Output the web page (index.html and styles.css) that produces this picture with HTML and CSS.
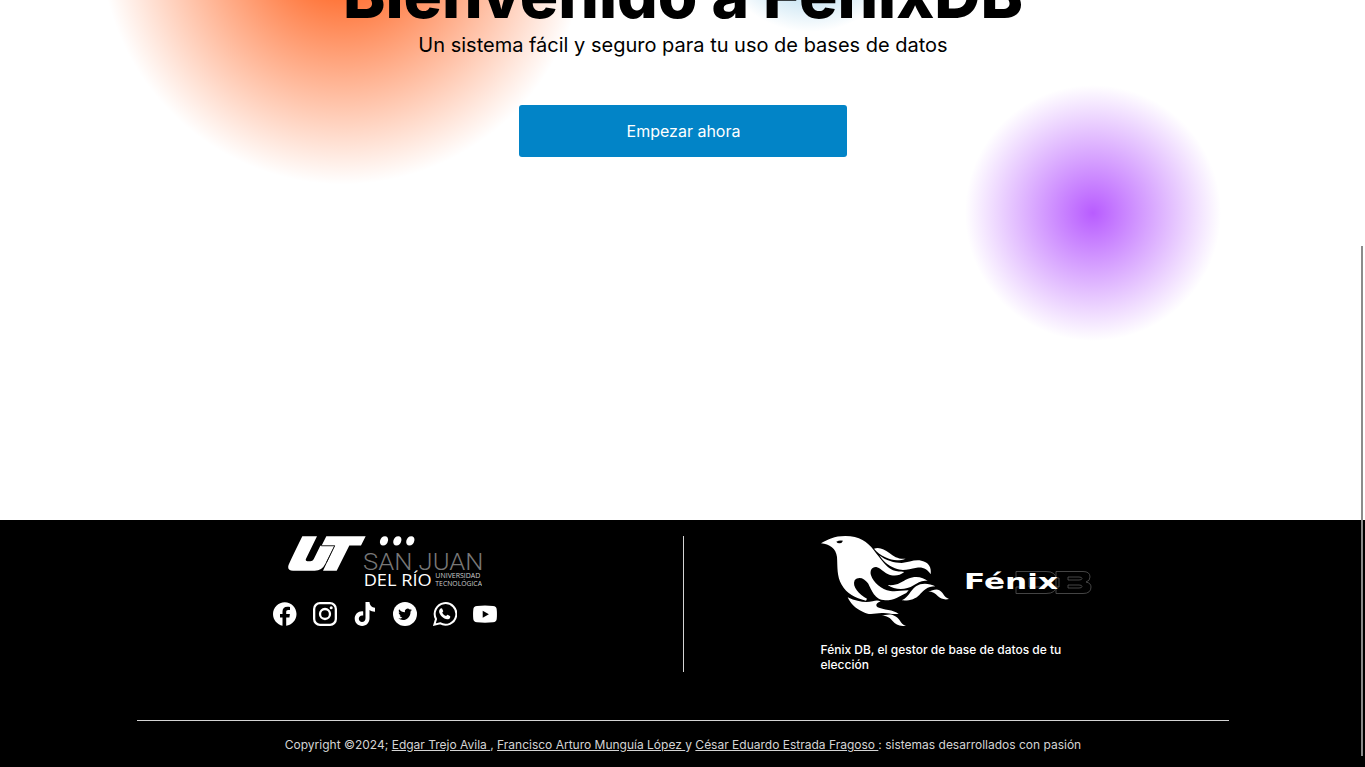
FILE: index.html
```
<!DOCTYPE html>
<html lang="es">
<head>
<meta charset="utf-8">
<title>FénixDB</title>
<link rel="stylesheet" href="styles.css">
</head>
<body>
<main class="hero">
  <div class="glow glow-orange"></div>
  <div class="glow glow-blue"></div>
  <div class="glow glow-purple"></div>
  <h1 class="title">Bienvenido a FénixDB</h1>
  <p class="subtitle">Un sistema fácil y seguro para tu uso de bases de datos</p>
  <a class="button">Empezar ahora</a>
</main>
<footer class="footer">
  <div class="columns">
    <section class="school">
      <svg class="school-logo" viewBox="24 33 582 152" fill="#fff">
        <path d="M67 33H111L78 101Q75 108 82 108H91Q98 108 101 102L121 62H163L136 116Q126 137 104 137H39Q20 136 26 119Q29 110 67 33Z"/>
        <path d="M139 33H257L243 61H208L170 137H129L165 61H125Z"/>
        <path d="M124 62H164L140 111" fill="none" stroke="#000" stroke-width="2"/>
        <g transform="translate(10 0) skewX(-12)"><ellipse cx="312" cy="47" rx="12" ry="14"/><ellipse cx="352" cy="47" rx="12" ry="14"/><ellipse cx="391" cy="47" rx="12" ry="14"/></g>
        <g class="logo-text">
          <text class="logo-city" x="249" y="134" textLength="361" lengthAdjust="spacingAndGlyphs">SAN JUAN</text>
          <text class="logo-river" x="251" y="182" textLength="204" lengthAdjust="spacingAndGlyphs">DEL RÍO</text>
          <text class="logo-small" x="466" y="158" textLength="135" lengthAdjust="spacingAndGlyphs">UNIVERSIDAD</text>
          <text class="logo-small" x="466" y="182" textLength="140" lengthAdjust="spacingAndGlyphs">TECNOLÓGICA</text>
        </g>
      </svg>
      <div class="socials">
        <svg viewBox="0 0 24 24"><path d="M23.500 12C23.500 5.400 18.300.2 11.800.2S0 5.400 0 12c0 5.900 4.300 10.700 9.500 11.700v-8.100h-2.500v-3.500h2.500V9.400c0-3 1.800-4.700 4.800-4.700 1.300 0 2.700.2 2.700.2v3h-1.800c-1.500 0-2 .9-2 1.900v2.300h3.700l-.5 3.500h-3.200v8.100C19 22.900 23.500 18 23.500 12Z"/></svg>
        <svg viewBox="0 0 24 24"><g fill="none" stroke="#fff" stroke-width="2.300"><rect x="1.150" y="1.150" width="21.700" height="21.700" rx="5.800"/><circle cx="12" cy="12" r="5"/></g><circle cx="18.200" cy="5.800" r="1.500"/></svg>
        <svg viewBox="0 0 24 24"><path d="M12.500 0h4c.2 3.200 2.400 5.500 5.500 5.800v4c-2 .1-3.900-.6-5.500-1.700v8.200c0 4.400-3 7.700-7.400 7.700-4.200 0-7.400-3.300-7.400-7.400 0-4.500 3.900-7.900 8.500-7.200v4.200c-2.300-.7-4.400.8-4.400 3.100 0 1.800 1.500 3.200 3.200 3.200 2 0 3.500-1.400 3.500-3.700Z"/></svg>
        <svg viewBox="0 0 24 24"><circle cx="12" cy="12" r="12"/><path fill="#000" d="M18.900 8c-.5.200-1 .4-1.600.5.600-.4 1-.9 1.200-1.600-.5.300-1.100.6-1.800.7A2.800 2.800 0 0 0 11.900 10.200c-2.300-.1-4.400-1.200-5.800-3-.7 1.300-.4 2.900.9 3.800-.5 0-.9-.1-1.300-.4 0 1.400 1 2.500 2.300 2.800-.4.100-.8.100-1.300 0 .4 1.200 1.400 2 2.700 2-1.200.9-2.600 1.300-4.100 1.200 6 3.700 12.200-.5 12.200-6.700V9.400c.6-.4 1-.9 1.400-1.400Z"/></svg>
        <svg viewBox="0 0 24 24"><path fill="none" stroke="#fff" stroke-width="2" d="M1.400 22.600 3 17A10.800 10.800 0 1 1 7 21.200Z"/><path d="M8.500 6.300c.5 0 .6.200.8.600l.9 2c.2.500-.6 1.100-1 1.600.8 1.700 2.100 2.900 3.900 3.600.5-.4 1-1.500 1.500-1.300l2.300 1.100c.8.400.3 2.200-.6 2.800-3.900 2.400-10.400-3.800-10.200-7.500.1-1.300 1.100-2.900 2.400-2.900Z"/></svg>
        <svg viewBox="0 0 24 24"><path fill-rule="evenodd" d="M4 4Q12 3 20 4 23.500 4.200 23.700 7.500 24.200 12 23.700 17 23.500 20.100 20 20.300 12 21 4 20.300.500 20.100.300 17-.2 12 .300 7.500.500 4.200 4 4ZM9.700 8.700v7l6.200-3.500Z"/></svg>
      </div>
    </section>
    <section class="product">
      <div class="brand">
        <svg class="bird" viewBox="15 18 390 270">
          <path d="M18 40C40 28 57 18 91 18C133 18 158 36 176 60C198 88 212 110 234 121C246 126 256 124 268 126C252 139 234 139 218 132C202 124 195 113 184 111C170 110 164 122 168 136C175 157 199 180 226 183C243 185 257 182 281 181L274 189C253 199 238 211 211 211C178 210 170 180 159 160C148 143 129 138 119 151C110 170 133 194 156 206L153 212C119 202 96 192 80 164C65 138 68 112 66 81C63 55 44 43 18 40Z"/>
          <path fill="#000" d="M64 35Q73 30 84 32Q81 40 73 40Q67 40 64 35Z"/>
          <path d="M177 56C192 50 209 58 222 68C238 80 250 88 272 86C252 94 231 92 211 82C196 75 186 66 177 56Z"/>
          <path d="M193 76C212 92 238 99 260 99C281 98 297 88 319 92C341 96 350 112 347 133C338 117 323 110 305 113C279 117 266 125 240 115C217 106 204 93 193 76Z"/>
          <path d="M218 165C248 168 258 155 279 146C302 136 326 142 338 153C319 150 309 158 296 166C271 182 239 180 218 165Z"/>
          <path d="M260 211C283 201 284 183 303 169C319 158 343 160 361 169C336 169 326 182 313 195C301 208 281 213 260 211Z"/>
          <path d="M340 184C352 183 363 174 373 181C389 192 385 201 402 207C389 210 377 207 369 199C361 190 352 185 340 184Z"/>
          <path d="M98 202C128 216 153 219 173 214C183 211 191 211 197 215C185 217 180 225 188 232C204 240 236 239 251 252C226 254 217 247 200 249C179 250 162 257 143 245C119 234 108 222 98 202Z"/>
          <path d="M193 256C209 257 219 251 233 255C257 263 253 281 273 288C252 289 243 284 232 272C222 260 210 256 193 256Z"/>
        </svg>
        <svg class="wordmark" viewBox="0 0 128 26">
          <g fill="none" stroke="#555" stroke-width=".8"><path fill-rule="evenodd" d="M52 1.500H82Q92 1.500 92 9V16Q92 23.500 82 23.500H52V17H56V8H52ZM65 8V17H79Q82 17 82 14V11Q82 8 79 8Z"/><path d="M92 1.500H119Q126 1.500 126 7 126 11 122 12 127 13 127 17 127 23.500 119 23.500H92V17H95V8H92ZM104 7V10H115Q118 10 118 8.500T115 7ZM104 15V18H115Q118 18 118 16.500T115 15Z"/></g>
          <text class="wordmark-text" x="0" y="19" textLength="94" lengthAdjust="spacingAndGlyphs">Fénix</text>
        </svg>
      </div>
      <p class="tagline">Fénix DB, el gestor de base de datos de tu elección</p>
    </section>
  </div>
  <p class="copyright">Copyright ©2024; <a>Edgar Trejo Avila </a>, <a>Francisco Arturo Munguía López </a>y <a>César Eduardo Estrada Fragoso </a>: sistemas desarrollados con pasión</p>
</footer>
<div class="scroll-thumb"></div>
</body>
</html>
```
FILE: styles.css
```
* { box-sizing: border-box; }
body {
  margin: 0;
  height: 767px;
  overflow: hidden;
  background: #fff;
  color: #000;
  font-family: Inter, sans-serif;
}
.hero {
  position: relative;
  height: 520px;
  overflow: hidden;
  display: flex;
  flex-direction: column;
  align-items: center;
  padding-left: 1px;
}
.glow { position: absolute; border-radius: 50%; }
.glow-orange {
  left: 93px; top: -308px; width: 500px; height: 500px;
  background: radial-gradient(closest-side, #ff4d00, transparent 97%);
}
.glow-blue {
  left: 710px; top: -168px; width: 200px; height: 200px;
  background: radial-gradient(closest-side, #0284c7, transparent);
  opacity: .6;
}
.glow-purple {
  left: 965px; top: 85px; width: 256px; height: 256px;
  background: radial-gradient(closest-side, #b85cff, transparent);
}
.title, .subtitle, .button { position: relative; }
.title {
  margin: -44px 0 0;
  font-size: 64px;
  font-weight: 800;
  line-height: 77px;
  white-space: nowrap;
}
.subtitle { margin: 0; font-size: 20px; line-height: 24px; }
.button {
  margin: 48px 1px 0 0;
  width: 328px;
  height: 52px;
  padding-left: 2px;
  border-radius: 3px;
  background: #0284c7;
  color: #fff;
  font-size: 16px;
  line-height: 52px;
  text-align: center;
}
.footer { height: 247px; padding: 16px 136px 0 137px; background: #000; color: #fff; }
.columns { display: grid; grid-template-columns: 547px 1fr; height: 136px; }
.school {
  display: flex;
  flex-direction: column;
  align-items: center;
  gap: 15px;
  padding-right: 50px;
  border-right: 1px solid #d4d4d4;
}
.school-logo { width: 194px; height: 51px; flex: none; }
.logo-text { font-family: "Open Sans", sans-serif; }
.logo-city { font-family: Roboto, sans-serif; font-size: 74px; font-weight: 300; fill: #777; }
.logo-river { font-size: 49px; }
.logo-small { font-size: 19px; fill: #ccc; }
.socials { display: flex; gap: 16px; }
.socials svg { width: 24px; height: 24px; fill: #fff; }
.product { padding-left: 136px; }
.brand { display: flex; align-items: center; gap: 14px; height: 90px; }
.bird { width: 130px; height: 90px; fill: #fff; }
.wordmark { width: 128px; height: 26px; margin-top: 4px; overflow: visible; }
.wordmark-text {
  font-family: "DejaVu Sans", sans-serif;
  font-size: 21.5px;
  font-weight: 700;
  fill: #fff;
}
.tagline { width: 273px; margin: 16px 0 0; padding-left: 0.5px; font-size: 12px; line-height: 15px; font-weight: 500; }
.copyright {
  margin: 48px 0 0;
  padding-top: 16px;
  border-top: 1px solid #d4d4d4;
  color: #d4d4d4;
  font-size: 12px;
  line-height: 16px;
  text-align: center;
}
.copyright a { text-decoration: underline; }
.scroll-thumb {
  position: absolute;
  left: 1361px; top: 246px;
  width: 2px; height: 510px;
  background: #8b8b8b;
}
```
